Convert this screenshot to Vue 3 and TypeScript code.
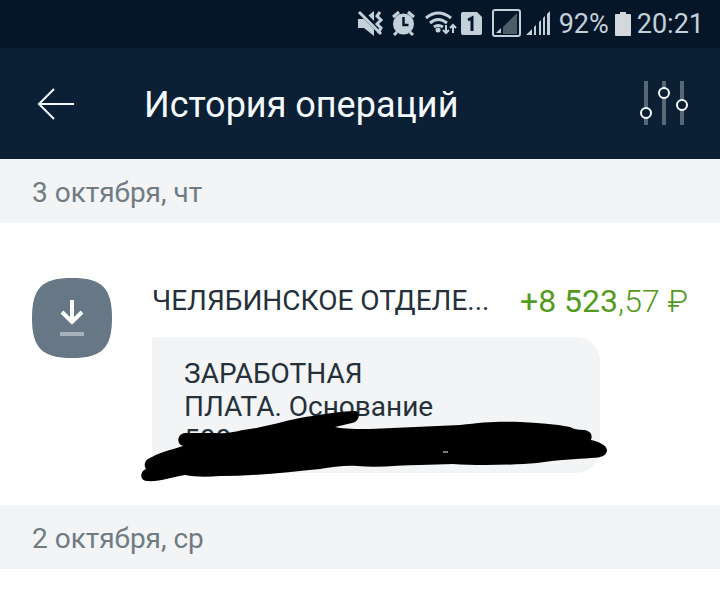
<script setup lang="ts">
interface Operation {
  name: string
  whole: string
  fraction: string
  note: string[]
}

interface Day {
  label: string
  operations: Operation[]
}

const days: Day[] = [
  {
    label: '3 октября, чт',
    operations: [
      {
        name: 'ЧЕЛЯБИНСКОЕ ОТДЕЛЕ...',
        whole: '+8 523',
        fraction: ',57 ₽',
        note: ['ЗАРАБОТНАЯ', 'ПЛАТА. Основание', '500'],
      },
    ],
  },
  { label: '2 октября, ср', operations: [] },
]
</script>

<template>
  <div class="screen">
    <div class="status">
      <svg class="status-icons" width="194" height="48" viewBox="357 0 194 48" aria-hidden="true">
        <g fill="#c3d0da">
          <path d="M358 19h6l10-8v25l-10-8h-6z" />
          <path d="M361 12l22 22" stroke="#061629" stroke-width="6" />
          <path d="M359 12l22 22" stroke="#c3d0da" stroke-width="3" />
          <path d="M380 12l-3 4 4 4-4 4 4 4-3 5" fill="none" stroke="#c3d0da" stroke-width="3" />
          <circle cx="403.5" cy="24" r="10.5" />
          <path d="M393 17l6-5M414 17l-6-5M397 32l-3 3M410 32l3 3" stroke="#c3d0da" stroke-width="3" />
          <path d="M403.5 17v8h5" fill="none" stroke="#061629" stroke-width="2.5" />
          <g fill="none" stroke="#c3d0da" stroke-width="3">
            <path d="M426 18q12-10 25 0" />
            <path d="M430 23q8-7 17 0" />
            <path d="M434 27q4-3 9 0" />
          </g>
          <circle cx="438" cy="30" r="2.5" />
          <path d="M446 25v8M443 30l3 3 3-3M453 33v-8M450 28l3-3 3 3" fill="none" stroke="#c3d0da" stroke-width="2" />
          <path d="M463 12h14l5 5v16q0 2-2 2h-17q-2 0-2-2v-19q0-2 2-2z" />
          <path d="M468 20l4-2v13" fill="none" stroke="#061629" stroke-width="3" />
          <rect x="493" y="10" width="27" height="26" rx="2" fill="none" stroke="#c3d0da" stroke-width="2" />
          <path d="M503 34v-7l14-14v21z" fill="#4e5c68" />
          <path d="M496 33l5-5v5z" />
          <path d="M526 35l6-6v6zM534 27l2-2v10h-2zM539 22l2-2v15h-2zM543 18l2-2v19h-2zM547 14l3-3v24h-3z" />
        </g>
      </svg>
      <span class="battery-level">92%</span>
      <svg class="battery" width="16" height="24" viewBox="0 0 16 24" aria-hidden="true">
        <path d="M5 0h6v2h4q1 0 1 1v20q0 1-1 1h-14q-1 0-1-1v-20q0-1 1-1h4z" fill="#d3d8da" />
      </svg>
      <time class="clock">20:21</time>
    </div>

    <header class="bar">
      <button class="icon-button" type="button" aria-label="Назад">
        <svg width="48" height="48" viewBox="0 0 48 48" fill="none" stroke="#f4faff" stroke-width="2">
          <path d="M42 24H8M22 9L7 24l15 15" />
        </svg>
      </button>
      <h1>История операций</h1>
      <button class="icon-button" type="button" aria-label="Фильтр">
        <svg width="48" height="48" viewBox="0 0 48 48" fill="none">
          <path d="M6 1v44M24 1v44M42 1v44" stroke="#586875" stroke-width="4" />
          <g fill="#0b2034" stroke="#f7fcff" stroke-width="2">
            <circle cx="6" cy="33" r="5" />
            <circle cx="24" cy="13" r="5" />
            <circle cx="42" cy="25" r="5" />
          </g>
        </svg>
      </button>
    </header>

    <main>
      <section v-for="day in days" :key="day.label">
        <h2>{{ day.label }}</h2>
        <article v-for="op in day.operations" :key="op.name" class="operation">
          <svg class="badge" width="80" height="80" viewBox="0 0 80 80" aria-hidden="true">
            <path d="M40 0C70 0 80 10 80 40S70 80 40 80 0 70 0 40 10 0 40 0z" fill="#687785" />
            <path d="M40 22v22M30 34l10 10 10-10" fill="none" stroke="#fff" stroke-width="4" />
            <path d="M28 56h24" stroke="#a6b1b9" stroke-width="4" />
          </svg>
          <div class="details">
            <div class="summary">
              <h3>{{ op.name }}</h3>
              <p class="amount">{{ op.whole }}<span>{{ op.fraction }}</span></p>
            </div>
            <div class="note">
              <p v-for="line in op.note" :key="line">{{ line }}</p>
              <svg class="scribble" width="468" height="73" viewBox="140 410 468 73" aria-hidden="true">
                <path
                  d="M355 411C340 411 318 415 300 418C280 422 262 428 243 430C235 432 222 434 216 433L185 433C177 434 176 444 183 446C170 450 158 453 148 459C144 462 144 466 146 469C139 472 140 481 147 481C159 482 172 477 185 475C195 477 207 477 220 476C255 476 290 472 320 469C332 467 347 465 357 466C380 468 400 465 420 465L453 464C478 466 513 465 537 463C557 460 577 459 591 458C602 458 607 455 607 450C606 445 600 442 591 440C593 434 590 431 584 430C578 430 573 429 570 427C555 424 538 423 520 422C500 421 483 422 460 425L370 429C357 429 344 429 335 427L352 423C361 421 360 411 355 411Z"
                />
                <path d="M443 452h5" stroke="#eef2f3" />
              </svg>
            </div>
          </div>
        </article>
      </section>
    </main>
  </div>
</template>

<style>
body {
  margin: 0;
  background: #fff;
}
</style>

<style scoped>
.screen {
  font-family: Roboto, 'Liberation Sans', sans-serif;
  color: #25303a;
}

h1,
h2,
h3,
p {
  margin: 0;
  font-weight: 400;
}

svg {
  display: block;
  flex: none;
}

.status {
  display: flex;
  align-items: center;
  justify-content: flex-end;
  height: 48px;
  padding-right: 16px;
  background: #061629;
  color: #c3d0da;
  font-size: 27px;
  line-height: 48px;
}

.battery-level {
  margin: 0 6px 0 8px;
}

.clock {
  margin-left: 6px;
}

.bar {
  display: flex;
  align-items: center;
  height: 111px;
  padding: 0 32px;
  background: #0b2034;
  color: #f4faff;
}

.icon-button {
  padding: 0;
  border: 0;
  background: none;
  cursor: pointer;
}

h1 {
  flex: 1;
  padding-top: 2px;
  margin-left: 64px;
  font-size: 36px;
  line-height: 48px;
}

h2 {
  padding: 4px 32px 0;
  background: #f2f4f6;
  color: #707b82;
  font-size: 28px;
  line-height: 60px;
}

.operation {
  display: flex;
  gap: 40px;
  padding: 55px 32px 32px;
}

.details {
  flex: 1;
  min-width: 0;
}

.summary {
  display: flex;
  align-items: center;
  justify-content: space-between;
  gap: 16px;
  height: 46px;
  white-space: nowrap;
}

h3 {
  overflow: hidden;
  font-size: 28px;
  line-height: 32px;
}

.amount {
  color: #549a20;
  font-size: 32px;
  line-height: 40px;
}

.amount span {
  font-weight: 300;
}

.note {
  position: relative;
  margin: 13px 88px 0 0;
  padding: 20px 32px 17px;
  border-radius: 0 24px 24px 24px;
  background: #f2f4f5;
  font-size: 28px;
  line-height: 33px;
}

.scribble {
  position: absolute;
  top: 73px;
  left: -12px;
}
</style>
